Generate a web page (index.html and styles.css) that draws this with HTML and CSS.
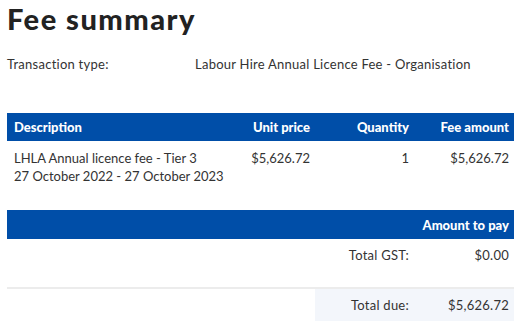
FILE: index.html
```html
<!DOCTYPE html>
<html lang="en">
<head>
  <meta charset="UTF-8" />
  <title>Fee summary</title>
  <link rel="stylesheet" href="styles.css">
</head>
<body>
  <h1>Fee summary</h1>

  <div class="detail">
    <span class="detail-label">Transaction type:</span>
    <span class="detail-value">Labour Hire Annual Licence Fee - Organisation</span>
  </div>

  <div class="fees">
    <div class="row head">
      <div>Description</div>
      <div class="num">Unit price</div>
      <div class="num">Quantity</div>
      <div class="num">Fee amount</div>
    </div>
    <div class="row item">
      <div>
        LHLA Annual licence fee - Tier 3<br>
        27 October 2022 - 27 October 2023
      </div>
      <div class="num">$5,626.72</div>
      <div class="num">1</div>
      <div class="num">$5,626.72</div>
    </div>
  </div>

  <div class="totals">
    <div class="row head">
      <div></div>
      <div></div>
      <div></div>
      <div class="num">Amount to pay</div>
    </div>
    <div class="row total">
      <div></div>
      <div></div>
      <div class="num">Total GST:</div>
      <div class="num">$0.00</div>
    </div>
    <div class="row total due">
      <div></div>
      <div></div>
      <div class="num shade">Total due:</div>
      <div class="num shade">$5,626.72</div>
    </div>
  </div>
</body>
</html>
```

FILE: styles.css
```css
body {
  font-family: Lato, "Liberation Sans", sans-serif;
  color: #333;
  margin: 0;
  padding: 0 6px 0 7px;
  font-size: 13px;
  letter-spacing: 0.25px;
}

h1 {
  font-size: 29px;
  font-weight: 900;
  color: #222;
  margin: 0;
  padding-top: 2px;
  line-height: 34px;
  letter-spacing: 1.5px;
}

.detail {
  display: flex;
  margin-top: 20px;
  line-height: 16px;
}

.detail-label {
  width: 188px;
}

.fees {
  margin-top: 41px;
}

.row {
  display: grid;
  grid-template-columns: minmax(0, 1fr) 100px 99px 100px;
}

.row > div {
  padding: 0 5px 0 7px;
  white-space: nowrap;
}

.num {
  text-align: right;
}

.head {
  background: #004ea8;
  color: white;
  font-weight: 900;
  letter-spacing: 0;
  height: 28px;
  align-items: center;
}

.item {
  padding-top: 8px;
  line-height: 18px;
  letter-spacing: 0;
}

.totals {
  margin-top: 25px;
}

.totals .head {
  height: 29px;
}

.total {
  height: 32px;
  align-items: center;
}

.total.due {
  border-top: 2px solid #ececec;
  margin-top: 16px;
  height: auto;
  align-items: stretch;
}

.shade {
  background: #f3f6fb;
  line-height: 32px;
}
```
